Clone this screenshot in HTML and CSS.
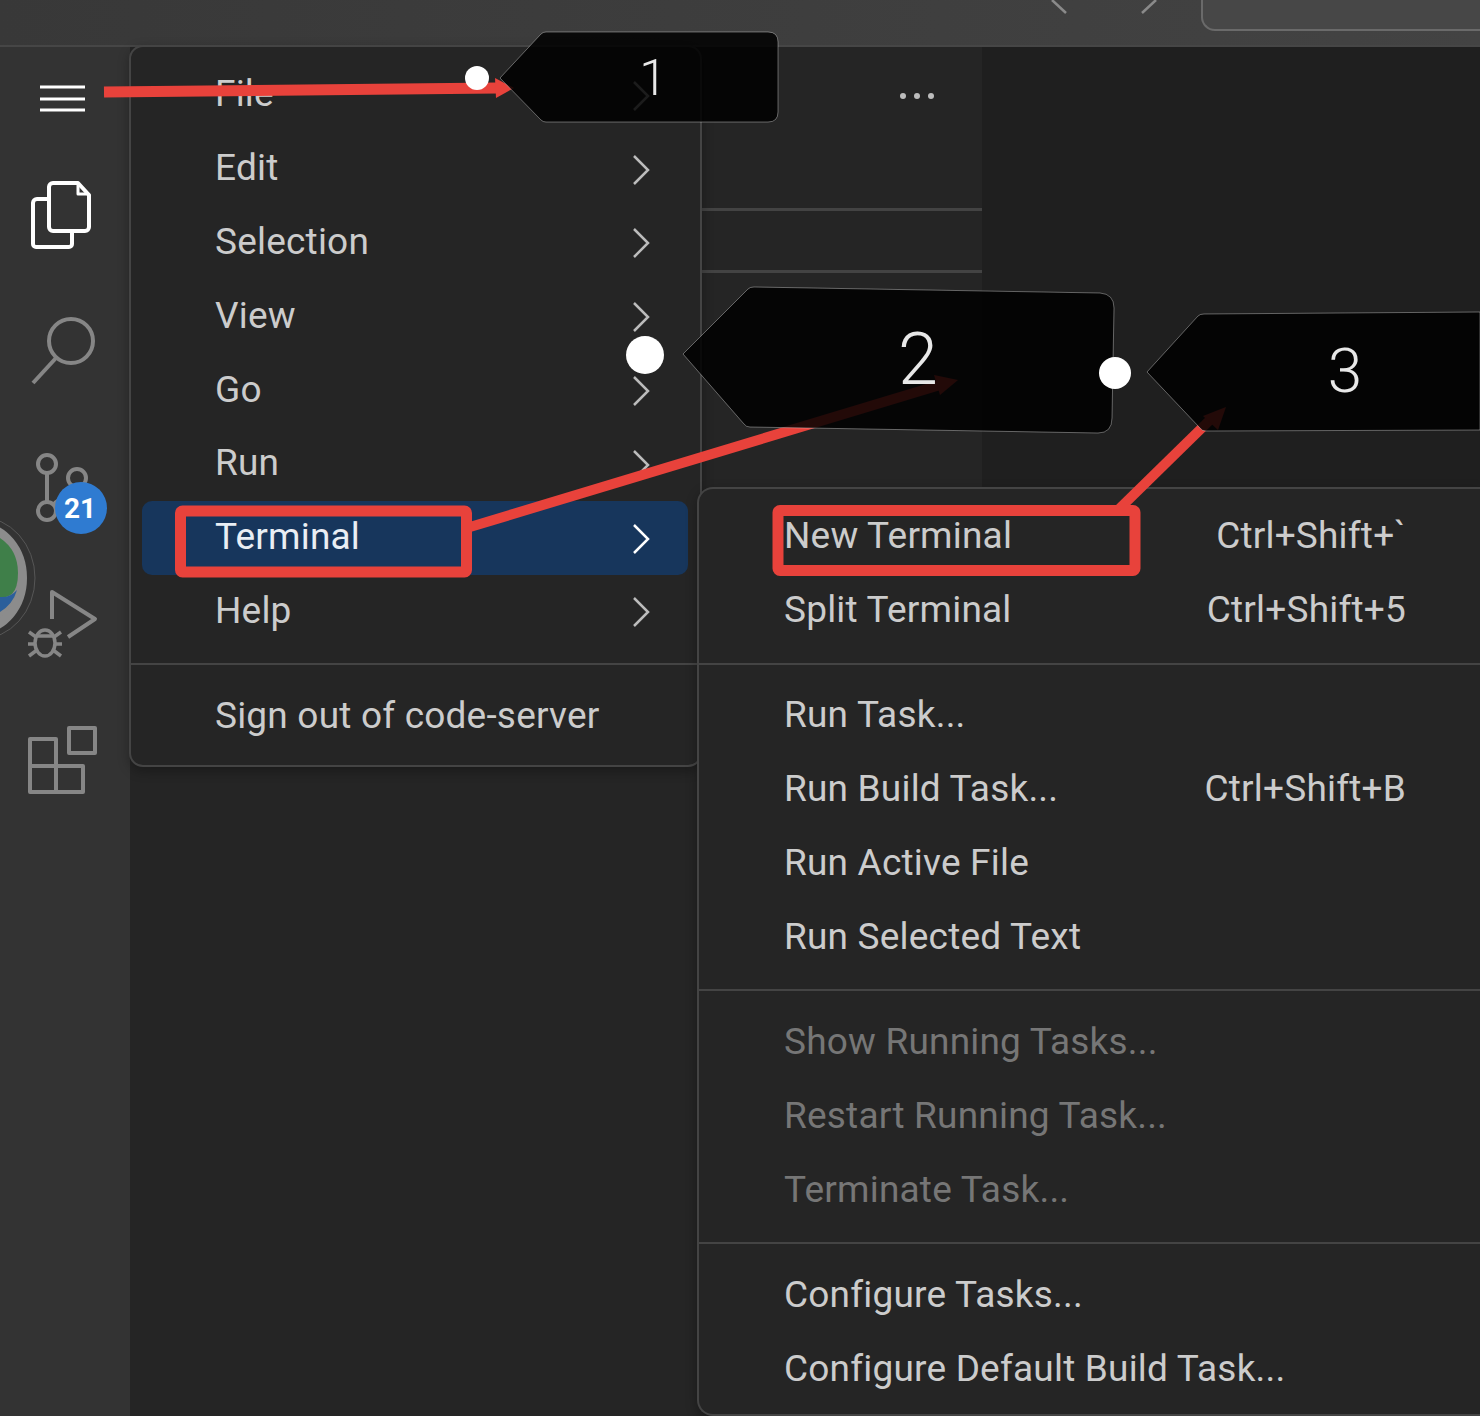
FILE: index.html
```html
<!DOCTYPE html>
<html lang="en">
<head>
  <meta charset="UTF-8">
  <meta name="viewport" content="width=device-width, initial-scale=1.0">
  <title>code-server terminal menu</title>
  <link rel="stylesheet" href="styles.css">
</head>
<body>
  <header class="titlebar">
    <svg class="nav-arrows" width="130" height="16" viewBox="0 0 130 16">
      <path d="M16 0 L30 13 M0 0" />
      <path d="M106 13 L120 0" />
    </svg>
    <div class="command-center"></div>
  </header>

  <div class="workbench">
    <nav class="activitybar">
      <svg class="activity-icon" width="130" height="109" viewBox="0 46 130 109">
        <path class="white thin" d="M40 86H85M40 98H85M40 109H85" />
      </svg>
      <svg class="activity-icon" width="130" height="127" viewBox="0 155 130 127">
        <path class="white" d="M49 198H37a4 4 0 0 0-4 4v41a3 3 0 0 0 3 3h33a3 3 0 0 0 3-3v-13" />
        <path class="white" d="M53 182H78L89 194V226a4 4 0 0 1-4 4H53a4 4 0 0 1-4-4V186a4 4 0 0 1 4-4Z" />
        <path class="white thin" d="M78 183V193H88" />
      </svg>
      <svg class="activity-icon" width="130" height="136" viewBox="0 282 130 136">
        <circle class="gray" cx="71" cy="340" r="22" />
        <path class="gray" d="M33 382L56 357" />
      </svg>
      <svg class="activity-icon" width="130" height="137" viewBox="0 418 130 137">
        <circle class="gray" cx="47" cy="463" r="9" />
        <circle class="gray" cx="77" cy="477" r="9" />
        <circle class="gray" cx="47" cy="510" r="9" />
        <path class="gray" d="M47 472V501M77 486C77 496 62 494 54 503" />
        <circle class="badge" cx="81" cy="507" r="26" />
        <text class="badge-text" x="80" y="517">21</text>
      </svg>
      <svg class="activity-icon" width="130" height="135" viewBox="0 555 130 135">
        <path class="gray" d="M52 618V591L95 618L68 636" />
        <ellipse class="gray thin3" cx="45" cy="642" rx="10" ry="13" />
        <path class="gray thin3" d="M36 635H54M29 631L36 636M61 631L54 636M28 643H35M55 643H62M29 655L37 649M61 655L53 649" />
      </svg>
      <svg class="activity-icon" width="130" height="140" viewBox="0 690 130 140">
        <path class="gray" d="M30 738H56V791H30ZM30 765H83V791H56M69 727H95V752H69Z" />
      </svg>
    </nav>

    <aside class="sidepanel">
      <div class="panel-head">
        <div class="dots"><span></span><span></span><span></span></div>
      </div>
      <div class="panel-row"></div>
    </aside>

    <main class="editor"></main>
  </div>

  <div class="menu main-menu">
    <div class="item"><span>File</span><svg class="chev" viewBox="0 0 18 30"><path d="M2 1L16 15L2 29" /></svg></div>
    <div class="item"><span>Edit</span><svg class="chev" viewBox="0 0 18 30"><path d="M2 1L16 15L2 29" /></svg></div>
    <div class="item"><span>Selection</span><svg class="chev" viewBox="0 0 18 30"><path d="M2 1L16 15L2 29" /></svg></div>
    <div class="item"><span>View</span><svg class="chev" viewBox="0 0 18 30"><path d="M2 1L16 15L2 29" /></svg></div>
    <div class="item"><span>Go</span><svg class="chev" viewBox="0 0 18 30"><path d="M2 1L16 15L2 29" /></svg></div>
    <div class="item"><span>Run</span><svg class="chev" viewBox="0 0 18 30"><path d="M2 1L16 15L2 29" /></svg></div>
    <div class="item active"><span>Terminal</span><svg class="chev" viewBox="0 0 18 30"><path d="M2 1L16 15L2 29" /></svg></div>
    <div class="item"><span>Help</span><svg class="chev" viewBox="0 0 18 30"><path d="M2 1L16 15L2 29" /></svg></div>
    <div class="sep"></div>
    <div class="item"><span>Sign out of code-server</span></div>
  </div>

  <div class="menu sub-menu">
    <div class="item"><span>New Terminal</span><span class="keys">Ctrl+Shift+`</span></div>
    <div class="item"><span>Split Terminal</span><span class="keys">Ctrl+Shift+5</span></div>
    <div class="sep"></div>
    <div class="item"><span>Run Task...</span></div>
    <div class="item"><span>Run Build Task...</span><span class="keys">Ctrl+Shift+B</span></div>
    <div class="item"><span>Run Active File</span></div>
    <div class="item"><span>Run Selected Text</span></div>
    <div class="sep"></div>
    <div class="item disabled"><span>Show Running Tasks...</span></div>
    <div class="item disabled"><span>Restart Running Task...</span></div>
    <div class="item disabled"><span>Terminate Task...</span></div>
    <div class="sep"></div>
    <div class="item"><span>Configure Tasks...</span></div>
    <div class="item"><span>Configure Default Build Task...</span></div>
  </div>

  <!-- avatar at the left edge and the hand drawn annotations on top of the screenshot -->
  <svg class="annotations" width="1480" height="1416" viewBox="0 0 1480 1416">
    <ellipse class="avatar-line" cx="-20" cy="578" rx="55" ry="61" />
    <ellipse class="avatar-ring" cx="-20" cy="578" rx="42.500" ry="51" />
    <path class="avatar-green" d="M0 538Q18 550 18 573Q18 588 12 594Q6 598 0 598Z" />
    <path class="avatar-blue" d="M0 597Q10 598 17 590Q13 604 0 612Z" />

    <path class="red-line" d="M104 92L498 88" />
    <path class="red-fill" d="M495 78L514 88L496 98Z" />
    <path class="red-line thinner" d="M470 527L940 385" />
    <path class="red-fill" d="M934 375L958 380L940 395Z" />
    <path class="red-line thinner" d="M1118 510L1212 418" />
    <path class="red-fill" d="M1203 416L1226 407L1218 430Z" />
    <rect class="red-box" x="180.500" y="511" width="286" height="61" rx="2" />
    <rect class="red-box" x="778" y="510.500" width="357" height="60" rx="2" />

    <path class="tag" d="M500 78L541 34Q543 32 546 32H768Q778 32 778 42V112Q778 122 768 122H546Q543 122 541 120Z" />
    <path class="tag" d="M683 354L748 289Q750 287 754 287L1100 293Q1114 294 1114 308L1112 418Q1112 433 1098 433L750 427Q746 427 744 424Z" />
    <path class="tag" d="M1147 372L1198 316Q1200 314 1204 314L1480 312V430L1206 431Q1202 431 1200 428Z" />
    <text class="tag-num n1" x="653" y="95">1</text>
    <text class="tag-num n2" x="918" y="384">2</text>
    <text class="tag-num n3" x="1345" y="392">3</text>

    <circle class="dot" cx="477" cy="78" r="12" />
    <circle class="dot" cx="645" cy="355" r="19" />
    <circle class="dot" cx="1115" cy="373" r="16" />
  </svg>
</body>
</html>
```

FILE: styles.css
```css
* {
  box-sizing: border-box;
}

html,
body {
  margin: 0;
  padding: 0;
}

body {
  position: relative;
  width: 1480px;
  height: 1416px;
  overflow: hidden;
  background: #1f1f1f;
  font-family: Roboto, sans-serif;
  color: #cccccc;
}

.titlebar {
  position: relative;
  height: 47px;
  background: linear-gradient(90deg, #383838, #434343);
  border-bottom: 2px solid #464646;
}

.nav-arrows {
  position: absolute;
  left: 1036px;
  top: 0;
  fill: none;
  stroke: #8a8a8a;
  stroke-width: 2.5;
}

.command-center {
  position: absolute;
  left: 1201px;
  top: 0;
  width: 279px;
  height: 31px;
  background: #474747;
  border: 2px solid #6a6a6a;
  border-top: none;
  border-right: none;
  border-radius: 0 0 0 14px;
}

.workbench {
  display: flex;
  height: 1369px;
}

.activitybar {
  width: 130px;
  flex: none;
  background: #333333;
}

.activity-icon {
  display: block;
  fill: none;
}

.white {
  stroke: #ffffff;
  stroke-width: 4;
  stroke-linejoin: round;
}

.white.thin {
  stroke-width: 3;
}

.gray {
  stroke: #868686;
  stroke-width: 4;
  stroke-linejoin: round;
}

.gray.thin3 {
  stroke-width: 3.5;
}

.badge {
  fill: #2f7bd1;
}

.badge-text {
  fill: #ffffff;
  font-size: 28px;
  font-weight: 700;
  text-anchor: middle;
}

.sidepanel {
  width: 852px;
  flex: none;
  background: #252525;
}

.panel-head {
  display: flex;
  justify-content: flex-end;
  height: 164px;
  padding: 46px 48px 0 0;
  border-bottom: 3px solid #434343;
}

.panel-row {
  height: 62px;
  border-bottom: 3px solid #434343;
}

.dots {
  display: flex;
  gap: 8px;
}

.dots span {
  width: 6px;
  height: 6px;
  border-radius: 50%;
  background: #bdbdbd;
}

.editor {
  flex: 1;
  background: #1f1f1f;
}

.menu {
  position: absolute;
  background: #252525;
  border: 2px solid #444444;
  font-size: 37px;
  letter-spacing: 0.2px;
}

.main-menu {
  left: 129px;
  top: 45px;
  width: 573px;
  height: 722px;
  padding: 11px 12px 0 11px;
  border-radius: 14px;
  box-shadow: 0 4px 12px rgba(0, 0, 0, 0.3);
}

.sub-menu {
  left: 697px;
  top: 487px;
  width: 783px;
  height: 929px;
  padding: 11px 0 0 85px;
  border-right: none;
  border-radius: 16px 0 0 16px;
  box-shadow: 0 4px 12px rgba(0, 0, 0, 0.3);
}

.item {
  display: flex;
  align-items: center;
  justify-content: space-between;
  height: 73.8px;
}

.item > span {
  margin-bottom: 2px;
}

.main-menu .item {
  padding: 0 38px 0 73px;
  border-radius: 10px;
}

.sub-menu .item {
  width: 622px;
}

.main-menu .sep {
  margin: 15px -12px 14px -11px;
}

.sep {
  height: 0;
  margin: 15px 0 14.5px -85px;
  border-top: 2px solid #444444;
}

.item.active {
  background: #17365c;
  color: #e9eef4;
}

.item.disabled {
  color: #767676;
}

.chev {
  width: 18px;
  height: 30px;
  margin-top: 2px;
  fill: none;
  stroke: #bcbcbc;
  stroke-width: 2.5;
}

.item.active .chev {
  stroke: #ffffff;
}

.annotations {
  position: absolute;
  left: 0;
  top: 0;
}

.avatar-line {
  fill: none;
  stroke: #565656;
  stroke-width: 1;
}

.avatar-ring {
  fill: #8c8c8c;
  stroke: #8c8c8c;
  stroke-width: 9;
}

.avatar-green {
  fill: #3f7f49;
}

.avatar-blue {
  fill: #2b5f9b;
}

.red-line {
  fill: none;
  stroke: #e8423b;
  stroke-width: 11;
}

.red-line.thinner {
  stroke-width: 10;
}

.red-fill {
  fill: #e8423b;
}

.red-box {
  fill: none;
  stroke: #e8423b;
  stroke-width: 11;
}

.tag {
  fill: rgba(0, 0, 0, 0.85);
  stroke: rgba(255, 255, 255, 0.35);
  stroke-width: 1;
}

.tag-num {
  fill: #e8e8e8;
  font-weight: 300;
  text-anchor: middle;
}

.n1 {
  font-size: 50px;
}

.n2 {
  font-size: 72px;
}

.n3 {
  font-size: 62px;
}

.dot {
  fill: #ffffff;
}
```
